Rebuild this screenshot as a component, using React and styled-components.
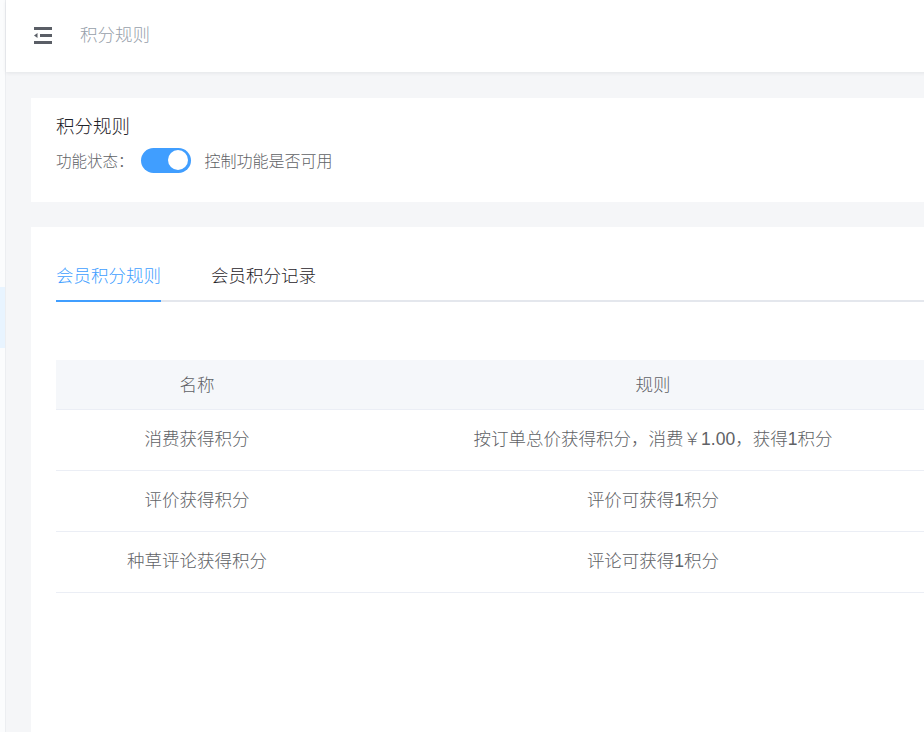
import {useState} from "react"
import styled, {createGlobalStyle} from "styled-components"

const GlobalStyle = createGlobalStyle`
  html, body {
    margin: 0;
    padding: 0;
    overflow: hidden;
    background: #f5f6f8;
    font-family: "Liberation Sans", "Noto Sans CJK SC", sans-serif;
    font-weight: 300;
  }
`

const rules = [
    {name: "消费获得积分", rule: "按订单总价获得积分，消费￥1.00，获得1积分"},
    {name: "评价获得积分", rule: "评价可获得1积分"},
    {name: "种草评论获得积分", rule: "评论可获得1积分"},
]

export default function App(){
    const [enabled, setEnabled] = useState(true)
    const [tab, setTab] = useState(0)

    return (
        <Layout>
            <GlobalStyle />
            <Sidebar>
                <SideItem active />
            </Sidebar>
            <Main>
                <TopBar>
                    <FoldIcon width="20" height="18" viewBox="0 0 20 18">
                        <rect x="1" y="0" width="18" height="3" />
                        <polygon points="1,8.5 4.5,6 4.5,11" />
                        <rect x="7" y="7" width="12" height="3" />
                        <rect x="1" y="14" width="18" height="3" />
                    </FoldIcon>
                    <Crumb>积分规则</Crumb>
                </TopBar>
                <Content>
                    <Card pad="19px 25px 29px">
                        <CardTitle>积分规则</CardTitle>
                        <StatusRow>
                            <Label>功能状态：</Label>
                            <Switch on={enabled} onClick={() => setEnabled(!enabled)} />
                            <Hint>控制功能是否可用</Hint>
                        </StatusRow>
                    </Card>
                    <Card pad="23px 25px" grow>
                        <Tabs>
                            {["会员积分规则", "会员积分记录"].map((t, i) => (
                                <Tab key={t} active={tab === i} onClick={() => setTab(i)}>{t}</Tab>
                            ))}
                        </Tabs>
                        <Table>
                            <HeadRow>
                                <Cell>名称</Cell>
                                <Cell>规则</Cell>
                            </HeadRow>
                            {rules.map(r => (
                                <Row key={r.name}>
                                    <Cell>{r.name}</Cell>
                                    <Cell>{r.rule}</Cell>
                                </Row>
                            ))}
                        </Table>
                    </Card>
                </Content>
            </Main>
        </Layout>
    )
}

const Layout = styled.div`
display: flex;
width: 1024px;
height: 732px;
`

const Sidebar = styled.aside`
width: 6px;
flex-shrink: 0;
background: #fbfcfd;
border-right: 1px solid #eceef1;
box-sizing: border-box;
padding-top: 287px;
`

const SideItem = styled.div`
height: 61px;
background: ${p => p.active ? "#e8f4ff" : "transparent"};
`

const Main = styled.div`
flex: 1;
display: flex;
flex-direction: column;
min-width: 0;
`

const TopBar = styled.header`
height: 72px;
flex-shrink: 0;
background: #fff;
display: flex;
align-items: center;
padding-left: 27px;
box-shadow: 0 1px 4px rgba(0, 21, 41, 0.08);
position: relative;
z-index: 1;
`

const FoldIcon = styled.svg`
fill: #5a5e66;
margin-bottom: 1px;
`

const Crumb = styled.span`
margin-left: 27px;
font-size: 17.5px;
line-height: 18px;
margin-bottom: 2px;
color: #97a0aa;
`

const Content = styled.main`
flex: 1;
display: flex;
flex-direction: column;
gap: 25px;
padding: 26px 25px 0;
`

const Card = styled.section`
background: #fff;
padding: ${p => p.pad};
flex: ${p => p.grow ? 1 : "none"};
`

const CardTitle = styled.div`
font-size: 18.5px;
line-height: 20px;
color: #1f2329;
`

const StatusRow = styled.div`
display: flex;
align-items: center;
height: 26px;
margin-top: 10px;
`

const Label = styled.span`
font-size: 15.5px;
color: #606266;
margin-right: 7px;
`

const Switch = styled.span`
width: 50px;
height: 25px;
border-radius: 13px;
background: ${p => p.on ? "#409eff" : "#dcdfe6"};
position: relative;
cursor: pointer;
&::after {
  content: "";
  position: absolute;
  top: 2.5px;
  left: ${p => p.on ? "27px" : "3px"};
  width: 20px;
  height: 20px;
  border-radius: 50%;
  background: #fff;
}
`

const Hint = styled.span`
font-size: 16px;
color: #606266;
margin-left: 14px;
`

const Tabs = styled.nav`
display: flex;
height: 50px;
border-bottom: 2px solid #e4e7ed;
margin-bottom: 58px;
`

const Tab = styled.div`
font-size: 17.5px;
line-height: 52px;
padding: 0 25px;
color: ${p => p.active ? "#409eff" : "#1f2329"};
position: relative;
cursor: pointer;
&:first-child { padding-left: 0; }
&::after {
  content: "";
  display: ${p => p.active ? "block" : "none"};
  position: absolute;
  left: 0;
  right: 25px;
  bottom: -2px;
  height: 2px;
  background: #409eff;
}
`

const Table = styled.div`
width: 912px;
`

const HeadRow = styled.div`
display: grid;
grid-template-columns: 282px 1fr;
box-sizing: border-box;
height: 50px;
padding-bottom: 2px;
background: #f5f7fa;
border-bottom: 1px solid #ebeef5;
align-items: center;
`

const Row = styled.div`
display: grid;
grid-template-columns: 282px 1fr;
box-sizing: border-box;
height: 61px;
padding-bottom: 5px;
border-bottom: 1px solid #ebeef5;
align-items: center;
`

const Cell = styled.div`
text-align: center;
font-size: 17.5px;
color: #606266;
`
